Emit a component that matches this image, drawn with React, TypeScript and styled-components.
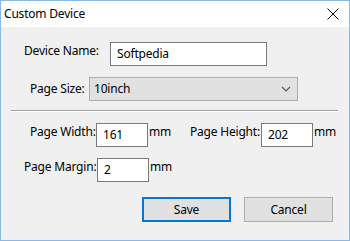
import React from "react";
import styled, { createGlobalStyle } from "styled-components";

const Global = createGlobalStyle`
  html, body { margin: 0; padding: 0; background: #f0f0f0; }
  * { box-sizing: border-box; }
`;

const font = `"Noto Sans", "Open Sans", "Liberation Sans", sans-serif`;

const Window = styled.div`
  width: 350px;
  height: 241px;
  border: 1px solid #8ab8e8;
  background: #f0f0f0;
  display: flex;
  flex-direction: column;
  font-family: ${font};
  font-size: 12px;
  letter-spacing: -0.2px;
  color: #000;
`;

const TitleBar = styled.div`
  height: 26px;
  background: #fff;
  display: flex;
  align-items: center;
  justify-content: space-between;
  padding: 0 10px 0 3px;
  flex-shrink: 0;
`;

const Title = styled.span`
  font-size: 12px;
  color: #000;
  margin-top: -2px;
`;

const Body = styled.div`
  display: flex;
  flex-direction: column;
  padding-top: 15px;
`;

const Row = styled.div<{ $left: number; $top: number }>`
  display: flex;
  align-items: flex-start;
  padding-left: ${(p) => p.$left}px;
  margin-top: ${(p) => p.$top}px;
  height: 24px;
`;

const Label = styled.span<{ $w: number; $dy?: number }>`
  width: ${(p) => p.$w}px;
  flex-shrink: 0;
  margin-top: ${(p) => p.$dy ?? 0}px;
  white-space: nowrap;
  line-height: 16px;
`;

const TextBox = styled.div<{ $w: number }>`
  width: ${(p) => p.$w}px;
  height: 24px;
  background: #fff;
  border: 1px solid #7a7a7a;
  padding-left: 6px;
  display: flex;
  align-items: center;
  line-height: 16px;
  flex-shrink: 0;
`;

const Unit = styled.span<{ $w?: number }>`
  width: ${(p) => (p.$w ? `${p.$w}px` : "auto")};
  margin-left: 1px;
  margin-top: 1px;
  line-height: 16px;
  flex-shrink: 0;
`;

const Select = styled.div`
  width: 209px;
  height: 24px;
  background: #e1e1e1;
  border: 1px solid #adadad;
  display: flex;
  align-items: center;
  justify-content: space-between;
  padding: 0 6px 0 4px;
  line-height: 16px;
`;

const Separator = styled.div`
  margin: 9px 11px 0 10px;
  height: 2px;
  border-top: 1px solid #a0a0a0;
  border-bottom: 1px solid #ffffff;
`;

const ButtonRow = styled.div`
  display: flex;
  justify-content: flex-end;
  gap: 13px;
  padding-right: 16px;
  margin-top: 15px;
`;

const Button = styled.div<{ $primary?: boolean }>`
  width: 89px;
  height: 25px;
  background: #e1e1e1;
  border: ${(p) => (p.$primary ? "2px solid #0078d7" : "1px solid #adadad")};
  display: flex;
  align-items: center;
  justify-content: center;
  line-height: 16px;
`;

const CloseIcon = () => (
  <svg width="12" height="12" viewBox="0 0 12 12">
    <path d="M0.5 0.5 L11.5 11.5 M11.5 0.5 L0.5 11.5" stroke="#000" strokeWidth="1" fill="none" />
  </svg>
);

const Chevron = () => (
  <svg width="10" height="6" viewBox="0 0 10 6">
    <path d="M1 1 L5 5 L9 1" stroke="#5a5a5a" strokeWidth="1.2" fill="none" />
  </svg>
);

export default function App() {
  return (
    <>
      <Global />
      <Window>
        <TitleBar>
          <Title>Custom Device</Title>
          <CloseIcon />
        </TitleBar>
        <Body>
          <Row $left={23} $top={0}>
            <Label $w={86} $dy={1}>Device Name:</Label>
            <TextBox $w={157}>Softpedia</TextBox>
          </Row>
          <Row $left={29} $top={11}>
            <Label $w={59} $dy={4}>Page Size:</Label>
            <Select>
              <span>10inch</span>
              <Chevron />
            </Select>
          </Row>
          <Separator />
          <Row $left={29} $top={11}>
            <Label $w={66} $dy={1}>Page Width:</Label>
            <TextBox $w={52}>161</TextBox>
            <Unit $w={41}>mm</Unit>
            <Label $w={71} $dy={1}>Page Height:</Label>
            <TextBox $w={52}>202</TextBox>
            <Unit>mm</Unit>
          </Row>
          <Row $left={23} $top={11}>
            <Label $w={73} $dy={1}>Page Margin:</Label>
            <TextBox $w={52}>2</TextBox>
            <Unit>mm</Unit>
          </Row>
          <ButtonRow>
            <Button $primary>Save</Button>
            <Button>Cancel</Button>
          </ButtonRow>
        </Body>
      </Window>
    </>
  );
}
